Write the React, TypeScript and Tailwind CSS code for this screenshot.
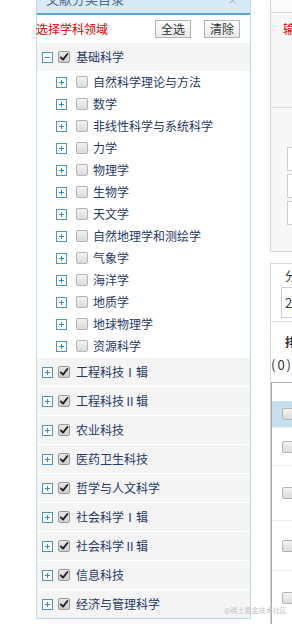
import React from 'react';

const subjects = [
  '自然科学理论与方法',
  '数学',
  '非线性科学与系统科学',
  '力学',
  '物理学',
  '生物学',
  '天文学',
  '自然地理学和测绘学',
  '气象学',
  '海洋学',
  '地质学',
  '地球物理学',
  '资源科学',
];

const groups = [
  '工程科技Ⅰ辑',
  '工程科技Ⅱ辑',
  '农业科技',
  '医药卫生科技',
  '哲学与人文科学',
  '社会科学Ⅰ辑',
  '社会科学Ⅱ辑',
  '信息科技',
  '经济与管理科学',
];

function Toggle({ open = false }: { open?: boolean }) {
  return (
    <svg width="11" height="11" viewBox="0 0 11 11" className="shrink-0">
      <rect x="0.5" y="0.5" width="10" height="10" fill="#fff" stroke="#4f95c2" />
      <path d="M3 5.5h5" stroke="#3f86b6" strokeWidth="1" />
      {!open && <path d="M5.5 3v5" stroke="#3f86b6" strokeWidth="1" />}
    </svg>
  );
}

function Check({ checked = false }: { checked?: boolean }) {
  return (
    <span
      className={`flex h-[12px] w-[12px] shrink-0 items-center justify-center rounded-[2px] border ${
        checked ? 'border-[#9a9a9a] bg-gradient-to-b from-[#e6e6e6] to-[#cfcfcf]' : 'border-[#b4b4b4] bg-gradient-to-b from-[#f2f2f2] to-[#dcdcdc]'
      }`}
    >
      {checked && (
        <svg width="10" height="10" viewBox="0 0 10 10">
          <path d="M1.8 5.4 L4 7.6 L8.4 2" fill="none" stroke="#222" strokeWidth="1.9" strokeLinecap="round" strokeLinejoin="round" />
        </svg>
      )}
    </span>
  );
}

export default function App() {
  return (
    <div className="relative flex h-[624px] w-[292px] overflow-hidden bg-white font-['Noto_Sans_CJK_SC','Noto_Sans',sans-serif] text-[12px] leading-none">
      <div className="w-[36px] shrink-0" />

      {/* 文献分类目录 */}
      <div className="w-[215px] shrink-0 self-start border-x border-b border-[#bddbe8]">
        <div className="relative h-[13px] overflow-hidden bg-[#d7ebf6]">
          <div className="-mt-[9px] pl-[9px] text-[13px] leading-[16px] whitespace-nowrap text-[#4b6b93]">文献分类目录</div>
          <div className="absolute top-[-5px] left-[190px] flex h-[10px] w-[11px] items-center justify-center text-[10px] text-[#9aaab6]">×</div>
        </div>
        <div className="h-[2px] bg-[#5ba8cd]" />

        <div className="flex h-[28px] items-center pr-[10px]">
          <span className="-ml-px text-[#e00000]">选择学科领域</span>
          <div className="ml-auto flex gap-[13px]">
            <button className="h-[18px] w-[36px] border border-[#b3b3b3] bg-gradient-to-b from-white to-[#e9e9e9] text-[12px] text-[#333]">全选</button>
            <button className="h-[18px] w-[36px] border border-[#b3b3b3] bg-gradient-to-b from-white to-[#e9e9e9] text-[12px] text-[#333]">清除</button>
          </div>
        </div>

        <div className="flex h-[28px] items-center bg-[#f4f4f4] pl-[5px]">
          <Toggle open />
          <span className="ml-[5px]"><Check checked /></span>
          <span className="ml-[6px] text-[#1f3a68]">基础科学</span>
        </div>

        {subjects.map((s) => (
          <div key={s} className="flex h-[22px] items-center pl-[19px]">
            <Toggle />
            <span className="ml-[9px]"><Check /></span>
            <span className="ml-[5px] whitespace-nowrap text-[#1f3a68]">{s}</span>
          </div>
        ))}

        {groups.map((g) => (
          <div key={g} className="flex h-[29px] items-center border-t border-white bg-[#f4f4f4] pl-[5px]">
            <Toggle />
            <span className="ml-[5px]"><Check checked /></span>
            <span className="ml-[6px] whitespace-nowrap text-[#1f3a68]">{g}</span>
          </div>
        ))}
      </div>

      <div className="w-[19px] shrink-0" />

      {/* right column */}
      <div className="flex w-[200px] shrink-0 flex-col">
        <div className="h-[273px] border-x border-b border-[#d6d6d6] bg-[#f7f7f7]">
          <div className="h-[13px] border-b border-[#dcdcdc] bg-[#fbfbfb]" />
          <div className="pt-[10px] pl-[12px] whitespace-nowrap text-[#e00000]">输入检索条件：</div>
          <div className="mt-[72px] border-t border-[#dedede]" />
          <div className="mt-[39px] flex flex-col gap-[3px] pl-[16px]">
            <div className="h-[24px] border border-[#cfcfcf] bg-white" />
            <div className="h-[24px] border border-[#cfcfcf] bg-white" />
            <div className="h-[24px] border border-[#cfcfcf] bg-white" />
          </div>
        </div>

        <div className="mt-[11px] flex-1 border-x border-t border-[#d6d6d6]">
          <div className="pt-[6px] pl-[14px] whitespace-nowrap text-[#333]">分组浏览</div>
          <div className="mt-[5px] ml-[10px] flex h-[31px] items-center border border-[#cfcfcf] bg-white pl-[3px] text-[13px] text-[#1f3a68]">2019</div>
          <div className="mt-[3px] border-t border-[#dedede]" />
          <div className="pt-[14px] pl-[14px] font-bold whitespace-nowrap text-[#333]">排序</div>
          <div className="pt-[10px] text-[13px] tracking-[2px] text-[#333]">(0)</div>
          <div className="mt-[11px] border-t border-l border-[#a9a9a9]">
            <div className="h-[18px] bg-white" />
            <div className="flex h-[26px] items-center bg-[#c6e0ed] pl-[10px]"><Check /></div>
            <div className="flex h-[38px] items-center border-t border-[#eeeeee] pl-[10px]"><Check /></div>
            <div className="flex h-[55px] items-center border-t border-[#eeeeee] pl-[10px]"><Check /></div>
            <div className="flex h-[50px] items-center border-t border-[#eeeeee] pl-[10px]"><Check /></div>
            <div className="flex h-[54px] items-center border-t border-[#eeeeee] pl-[10px]"><Check /></div>
          </div>
        </div>
      </div>

      <div className="absolute top-[607px] left-[224px] text-[7px] whitespace-nowrap text-[#c4c4c4]">@稀土掘金技术社区</div>
    </div>
  );
}
